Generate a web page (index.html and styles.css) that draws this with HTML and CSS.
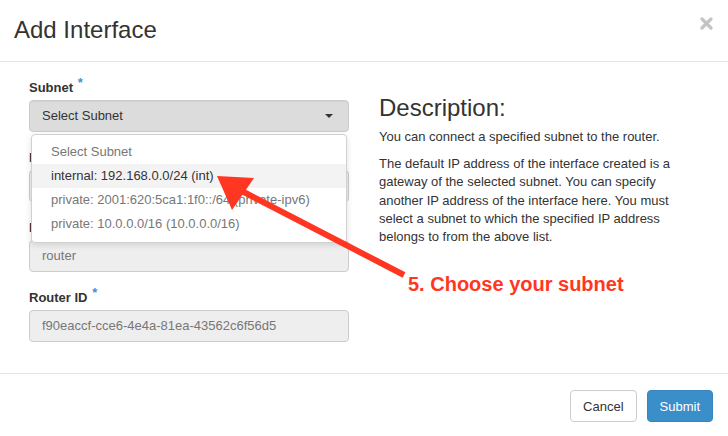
FILE: index.html
```html
<!DOCTYPE html>
<html lang="en">
<head>
  <meta charset="UTF-8" />
  <title>Add Interface</title>
  <link rel="stylesheet" href="styles.css">
</head>
<body>
  <div class="modal">
    <div class="modal-header">
      <h4>Add Interface</h4>
      <span class="close">
        <svg width="13" height="13" viewBox="0 0 13 13"><path d="M2 2 L11 11 M11 2 L2 11" stroke="#c4c4c4" stroke-width="3.2" stroke-linecap="round"/></svg>
      </span>
    </div>

    <div class="modal-body">
      <div class="left">
        <div class="form-group">
          <label>Subnet <span class="req">*</span></label>
          <div class="select">
            Select Subnet
            <span class="caret"></span>
          </div>
          <!-- open dropdown sits over the fields below -->
          <ul class="dropdown">
            <li class="muted">Select Subnet</li>
            <li class="hover">internal: 192.168.0.0/24 (int)</li>
            <li>private: 2001:620:5ca1:1f0::/64 (private-ipv6)</li>
            <li>private: 10.0.0.0/16 (10.0.0.0/16)</li>
          </ul>
        </div>
        <div class="form-group">
          <label>IP Address (optional)</label>
          <div class="input"></div>
        </div>
        <div class="form-group">
          <label>Router Name <span class="req">*</span></label>
          <div class="input">router</div>
        </div>
        <div class="form-group">
          <label>Router ID <span class="req">*</span></label>
          <div class="input">f90eaccf-cce6-4e4a-81ea-43562c6f56d5</div>
        </div>
      </div>

      <div class="right">
        <h3>Description:</h3>
        <p>You can connect a specified subnet to the router.</p>
        <p>The default IP address of the interface created is a gateway of the selected subnet. You can specify another IP address of the interface here. You must select a subnet to which the specified IP address belongs to from the above list.</p>
      </div>
    </div>

    <div class="modal-footer">
      <button class="btn">Cancel</button>
      <button class="btn btn-primary">Submit</button>
    </div>

    <!-- screenshot annotation -->
    <svg class="arrow" width="728" height="436" viewBox="0 0 728 436">
      <line x1="404" y1="275" x2="236" y2="188" stroke="#ff3621" stroke-width="6"/>
      <polygon points="217,176 254,178 232,210" fill="#ff3621"/>
    </svg>
    <div class="note">5. Choose your subnet</div>
  </div>
</body>
</html>
```

FILE: styles.css
```css
* {
  box-sizing: border-box;
}
body {
  margin: 0;
  background: white;
  font-family: "Liberation Sans", Arial, sans-serif;
  color: #333;
}
.modal {
  position: relative;
  width: 728px;
  height: 436px;
  background: white;
}
.modal-header {
  display: flex;
  justify-content: space-between;
  align-items: center;
  height: 62px;
  padding: 0 15px 2px 14px;
  border-bottom: 1px solid #e5e5e5;
}
.modal-header h4 {
  margin: 0;
  font-size: 24px;
  font-weight: normal;
  color: #333;
}
.close {
  display: flex;
  margin-top: -12px;
  margin-right: 0;
}
.modal-body {
  display: flex;
  height: 312px;
  padding: 17px 15px 0 29px;
  border-bottom: 1px solid #e5e5e5;
}
.left {
  position: relative;
  width: 320px;
}
.right {
  width: 320px;
  margin-left: 30px;
}
.form-group {
  margin-bottom: 17px;
}
.form-group label {
  display: block;
  height: 17px;
  line-height: 17px;
  margin-bottom: 4px;
  font-size: 13px;
  font-weight: bold;
  color: #333;
}
.req {
  position: relative;
  top: -5px;
  color: #3c94d4;
  font-size: 13px;
  margin-left: 1px;
}
.select, .input {
  height: 32px;
  line-height: 30px;
  padding: 0 12px;
  font-size: 13px;
  border: 1px solid #ccc;
  border-radius: 4px;
}
.select {
  position: relative;
  background: #dcdcdc;
  color: #333;
  box-shadow: inset 0 1px 1px rgba(0,0,0,0.05);
}
.caret {
  position: absolute;
  right: 15px;
  top: 13px;
  width: 0;
  height: 0;
  border-left: 4px solid transparent;
  border-right: 4px solid transparent;
  border-top: 4px solid #333;
}
.input {
  background: #eee;
  color: #777;
}
.dropdown {
  position: absolute;
  top: 55px;
  left: 2px;
  width: 316px;
  margin: 0;
  padding: 5px 0 6px;
  list-style: none;
  background: white;
  border: 1px solid #d0d0d0;
  border-radius: 4px;
  box-shadow: 0 2px 6px rgba(0,0,0,0.12);
  z-index: 2;
}
.dropdown li {
  height: 24px;
  line-height: 24px;
  padding-left: 19px;
  font-size: 13px;
  color: #777;
}
.dropdown li.hover {
  background: #f3f3f3;
  color: #333;
}
.right h3 {
  margin: 16px 0 7px;
  font-size: 24px;
  line-height: 26px;
  font-weight: normal;
  color: #333;
}
.right p {
  margin: 0 0 9px;
  font-size: 13px;
  line-height: 18.2px;
  color: #333;
}
.modal-footer {
  display: flex;
  justify-content: flex-end;
  gap: 10px;
  padding: 16px 15px 0;
}
.btn {
  height: 32px;
  padding: 0 12px;
  font-family: "Liberation Sans", Arial, sans-serif;
  font-size: 13px;
  color: #333;
  background: white;
  border: 1px solid #ccc;
  border-radius: 4px;
}
.btn-primary {
  background: #3a8fca;
  border-color: #3486c0;
  color: white;
}
.arrow {
  position: absolute;
  top: 0;
  left: 0;
  z-index: 3;
}
.note {
  position: absolute;
  left: 408px;
  top: 273px;
  font-size: 20px;
  font-weight: bold;
  color: #ff3621;
  z-index: 3;
}
```
